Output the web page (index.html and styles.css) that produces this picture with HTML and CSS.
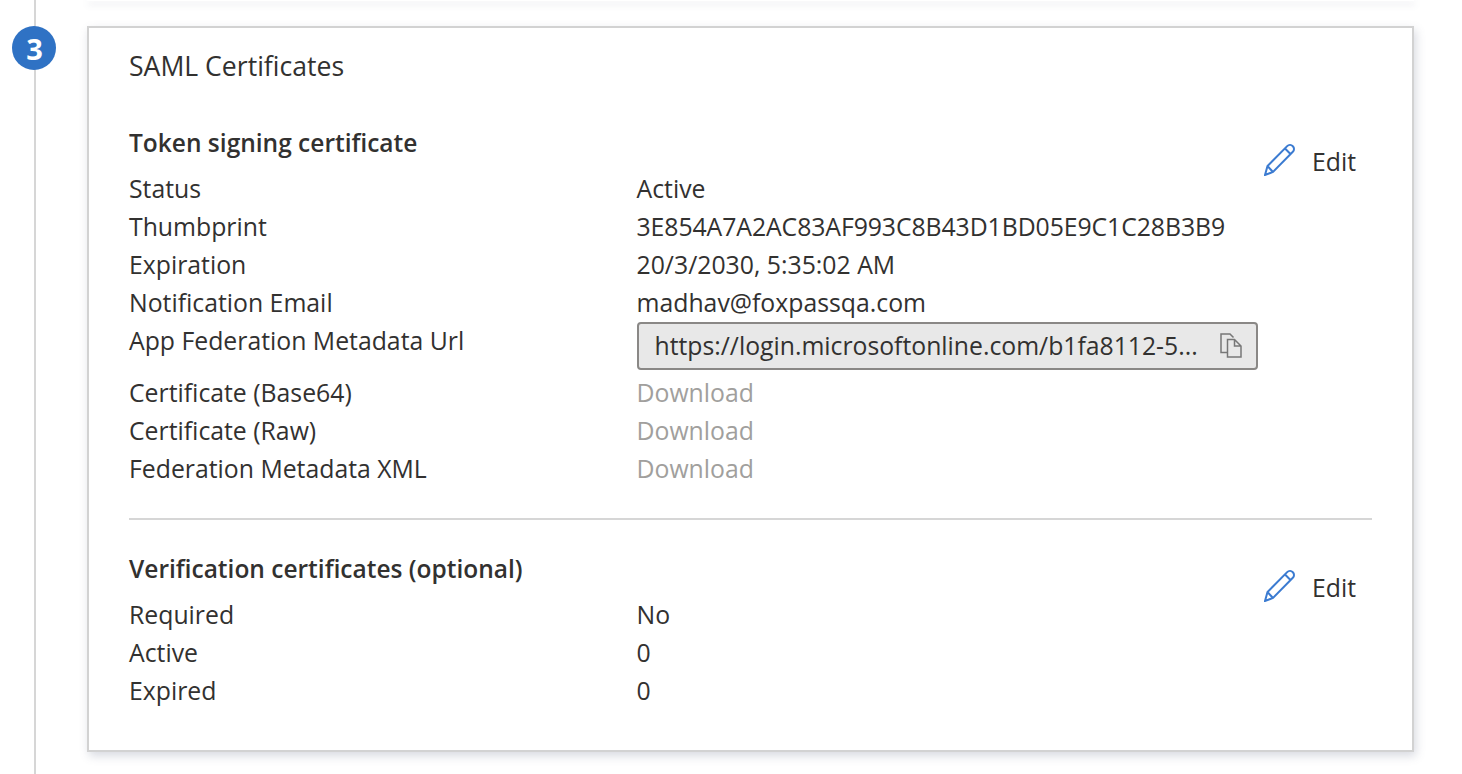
FILE: index.html
```html
<!DOCTYPE html>
<html lang="en">
<head>
<meta charset="utf-8">
<title>SAML Certificates</title>
<link rel="stylesheet" href="styles.css">
</head>
<body>
<div class="wizard">
  <div class="rail">
    <div class="step-badge">3</div>
  </div>
  <div class="content">
    <div class="prev-card"></div>
    <section class="card">
      <h2 class="card-title">SAML Certificates</h2>
      <div class="cert-section token">
        <div class="cert-body">
          <h3 class="cert-heading">Token signing certificate</h3>
          <div class="kv"><span class="k">Status</span><span class="v">Active</span></div>
          <div class="kv"><span class="k">Thumbprint</span><span class="v hash">3E854A7A2AC83AF993C8B43D1BD05E9C1C28B3B9</span></div>
          <div class="kv"><span class="k">Expiration</span><span class="v">20/3/2030, 5:35:02 AM</span></div>
          <div class="kv"><span class="k">Notification Email</span><span class="v">madhav@foxpassqa.com</span></div>
          <div class="kv kv-field"><span class="k">App Federation Metadata Url</span>
            <div class="copy-field">
              <span class="copy-text">https://login.microsoftonline.com/b1fa8112-5...</span>
              <svg class="copy-icon" viewBox="0 0 22 25" width="22" height="25" aria-hidden="true"><path d="M8 19.500H1V1H10L13.500 4.500M7.500 6.500H14.500L21 13V24H7.500ZM14.500 6.500V13H21" fill="none" stroke="#777" stroke-width="1.500"/></svg>
            </div>
          </div>
          <div class="kv"><span class="k">Certificate (Base64)</span><span class="v muted">Download</span></div>
          <div class="kv"><span class="k">Certificate (Raw)</span><span class="v muted">Download</span></div>
          <div class="kv"><span class="k">Federation Metadata XML</span><span class="v muted">Download</span></div>
        </div>
        <div class="edit">
          <svg class="edit-icon" viewBox="0 0 32 32" width="32" height="32" aria-hidden="true"><path d="M1 31L3.500 22 23.170 2.170A4 4 0 0 1 28.830 7.830L9 28ZM3.500 22L9 28M21 4.500L26.500 10" fill="none" stroke="#3b7bd1" stroke-width="2"/></svg>
          <span>Edit</span>
        </div>
      </div>
      <hr class="divider">
      <div class="cert-section">
        <div class="cert-body">
          <h3 class="cert-heading">Verification certificates (optional)</h3>
          <div class="kv"><span class="k">Required</span><span class="v">No</span></div>
          <div class="kv"><span class="k">Active</span><span class="v">0</span></div>
          <div class="kv"><span class="k">Expired</span><span class="v">0</span></div>
        </div>
        <div class="edit">
          <svg class="edit-icon" viewBox="0 0 32 32" width="32" height="32" aria-hidden="true"><path d="M1 31L3.500 22 23.170 2.170A4 4 0 0 1 28.830 7.830L9 28ZM3.500 22L9 28M21 4.500L26.500 10" fill="none" stroke="#3b7bd1" stroke-width="2"/></svg>
          <span>Edit</span>
        </div>
      </div>
    </section>
  </div>
</div>
</body>
</html>
```
FILE: styles.css
```css
* { box-sizing: border-box; }
html, body { margin: 0; height: 100%; background: #fff; overflow: hidden; }
body { font-family: "Open Sans", "Noto Sans", sans-serif; font-size: 24.8px; color: #323130; }

.wizard { display: flex; height: 774px; }
.rail { position: relative; width: 87px; flex: none; }
.rail::before { content: ""; position: absolute; left: 34px; top: 0; bottom: 0; width: 2px; background: #d6d6d6; }
.step-badge {
  position: absolute; left: 12px; top: 26px; width: 44px; height: 44px; border-radius: 50%;
  background: #2f72c4; color: #fff; font-weight: 700; font-size: 29px; padding-left: 1px;
  display: flex; align-items: center; justify-content: center;
}

.content { width: 1327px; flex: none; }
.prev-card { height: 1px; background: #fff; box-shadow: 1px 3px 6px rgba(90, 100, 130, .34); margin-bottom: 25px; }
.card {
  height: 726px; border: 2px solid #d2d2d2; background: #fff; padding: 19px 40px 0;
  box-shadow: 2px 4px 9px rgba(90, 100, 130, .24);
}
.card-title { margin: 0 0 38px; font-size: 26.6px; font-weight: 400; line-height: 38px; }
.cert-section { display: flex; justify-content: space-between; padding-right: 16px; }
.cert-body { flex: 1; }
.cert-heading { margin: 0 0 7px; padding-top: 1px; font-size: 24.5px; font-weight: 600; line-height: 38px; }
.kv { display: grid; grid-template-columns: 507.500px 1fr; height: 38px; line-height: 38px; }
.kv-field { height: 52px; }
.hash { letter-spacing: -0.08px; }
.muted { color: #a19f9d; }
.copy-field {
  width: 621px; height: 48px; display: flex; align-items: center; justify-content: space-between;
  padding: 0 14px 1px 16px; background: #e8e8e8; border: 2px solid #8a8886; border-radius: 4px;
  margin-top: 1px;
}
.copy-text { white-space: nowrap; font-size: 24.75px; }
.copy-icon { flex: none; }
.edit { display: flex; align-items: center; gap: 16px; height: 38px; margin-top: 19px; }
.edit-icon { flex: none; margin-bottom: 2px; }
.divider { margin: 31px 0 29px; border: 0; border-top: 2px solid #d6d6d6; }
```
